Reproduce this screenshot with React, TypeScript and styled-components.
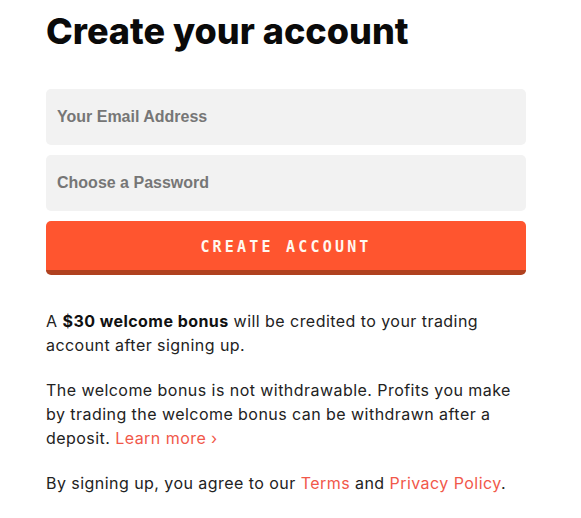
import React from 'react';
import styled, { createGlobalStyle } from 'styled-components';

const GlobalStyle = createGlobalStyle`
    html, body {
        margin: 0;
        padding: 0;
        background: #ffffff;
    }
    body {
        font-family: Inter, "Noto Sans", sans-serif;
        -webkit-font-smoothing: antialiased;
    }
`

const Page = styled.main`
    width: 480px;
    padding: 10px 0 0 46px;
`

const Title = styled.h1`
    margin: 0 0 37px;
    font-family: Inter, "Noto Sans", sans-serif;
    font-weight: 800;
    font-size: 36px;
    line-height: 42px;
    color: #0a0a0a;
`

const Form = styled.form`
    display: flex;
    flex-direction: column;
    gap: 10px;
`

const Field = styled.input`
    box-sizing: border-box;
    width: 100%;
    height: 56px;
    padding: 0 11px;
    border: none;
    border-radius: 5px;
    background: #f2f2f2;
    font-family: "Liberation Sans", Arial, sans-serif;
    font-weight: 700;
    font-size: 16px;
    color: #333;
    outline: none;
    &::placeholder {
        color: #767676;
        opacity: 1;
    }
`

const SubmitButton = styled.button`
    box-sizing: border-box;
    width: 100%;
    height: 54px;
    border: none;
    border-bottom: 5px solid #b0411f;
    border-radius: 5px;
    background: #ff552f;
    color: #fff8ef;
    font-family: "DejaVu Sans Mono", "Liberation Mono", monospace;
    font-weight: 700;
    font-size: 15px;
    letter-spacing: 3.2px;
    text-transform: uppercase;
    cursor: pointer;
    padding: 3px 0 0;
`

const Copy = styled.div`
    margin-top: 34px;
    display: flex;
    flex-direction: column;
    gap: 21px;
`

const Paragraph = styled.p`
    margin: 0;
    font-family: Inter, "Noto Sans", sans-serif;
    font-size: 16px;
    line-height: 24px;
    letter-spacing: 0.45px;
    color: #222;
    strong {
        font-weight: 700;
        color: #111;
    }
`

const Link = styled.a`
    color: #f1584a;
    text-decoration: none;
`

const App: React.FC = () => {
    return (
        <>
        <GlobalStyle />
        <Page>
            <Title>Create your account</Title>
            <Form onSubmit={e => e.preventDefault()}>
                <Field type="email" placeholder="Your Email Address" />
                <Field type="password" placeholder="Choose a Password" />
                <SubmitButton type="submit">Create Account</SubmitButton>
            </Form>
            <Copy>
                <Paragraph>
                    A <strong>$30 welcome bonus</strong> will be credited to your trading account after signing up.
                </Paragraph>
                <Paragraph>
                    The welcome bonus is not withdrawable. Profits you make by trading the welcome bonus can be withdrawn after a deposit. <Link href="#">Learn more ›</Link>
                </Paragraph>
                <Paragraph>
                    By signing up, you agree to our <Link href="#">Terms</Link> and <Link href="#">Privacy Policy</Link>.
                </Paragraph>
            </Copy>
        </Page>
        </>
    )
}

export default App
